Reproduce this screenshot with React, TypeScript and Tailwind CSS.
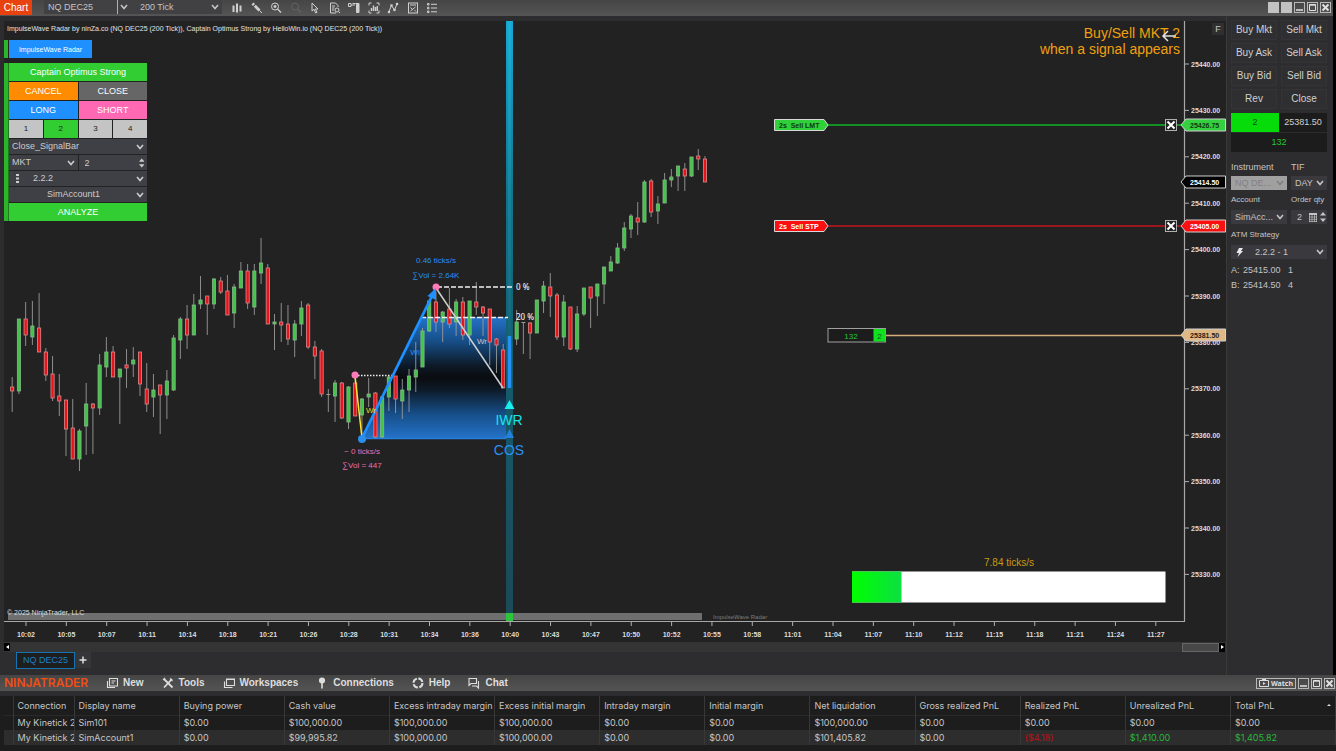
import React from "react";

type Bar = ["g" | "r" | "d", number, number, number, number];

// direction, wick top, body top, body bottom, wick bottom
const bars: (Bar | null)[] = [
  ["r", 377, 387, 391, 412], ["g", 319, 319, 391, 394], ["r", 302, 319, 335, 346], ["g", 301, 326, 337, 345],
  ["r", 293, 328, 352, 352], ["r", 348, 352, 375, 381], ["r", 356, 374, 398, 401], ["r", 374, 396, 401, 416],
  ["r", 400, 400, 429, 456], ["r", 399, 428, 459, 459], ["g", 429, 431, 459, 471], ["g", 383, 404, 426, 455],
  ["r", 403, 404, 408, 454], ["g", 354, 365, 408, 415], ["g", 337, 352, 367, 377], ["r", 346, 352, 377, 377],
  ["g", 369, 369, 377, 424], ["r", 349, 365, 368, 388], ["g", 347, 360, 364, 377], ["r", 352, 352, 384, 396],
  ["r", 363, 389, 404, 412], ["g", 374, 390, 397, 417], ["r", 385, 385, 395, 434], ["g", 370, 381, 395, 419],
  ["g", 335, 338, 390, 391], ["g", 317, 319, 340, 359], ["r", 305, 319, 335, 349], ["g", 294, 305, 335, 335],
  ["g", 276, 300, 304, 309], ["r", 296, 296, 304, 335], ["g", 278, 279, 304, 309], ["r", 277, 281, 292, 294],
  ["r", 275, 291, 315, 315], ["g", 284, 287, 313, 328], ["g", 262, 271, 288, 288], ["r", 264, 271, 303, 309],
  ["g", 264, 271, 307, 315], ["g", 238, 263, 273, 284], ["r", 264, 268, 324, 324], ["g", 314, 322, 324, 350],
  ["r", 303, 322, 325, 342], ["r", 305, 324, 339, 345], ["g", 320, 324, 340, 357], ["g", 301, 308, 324, 336],
  ["r", 303, 305, 347, 349], ["r", 341, 347, 356, 379], ["r", 349, 351, 394, 397], ["d", 389, 394, 395, 412],
  ["g", 380, 383, 396, 422], ["r", 382, 383, 418, 419], ["g", 386, 387, 422, 429], ["r", 377, 383, 416, 416],
  ["g", 398, 399, 415, 438], ["g", 378, 394, 397, 407], ["r", 392, 393, 437, 438], ["g", 396, 397, 437, 438],
  ["g", 376, 377, 397, 411], ["r", 376, 376, 399, 413], ["g", 379, 390, 401, 419], ["g", 369, 376, 390, 412],
  ["g", 342, 370, 377, 392], ["g", 328, 331, 367, 367], ["g", 301, 301, 331, 332], ["r", 292, 302, 322, 332],
  ["g", 311, 312, 322, 342], ["r", 288, 309, 324, 328], ["g", 299, 302, 322, 336], ["r", 297, 302, 335, 340],
  ["g", 301, 301, 335, 345], ["r", 282, 302, 307, 315], ["r", 306, 307, 313, 336], ["r", 309, 309, 342, 365],
  ["r", 338, 339, 345, 373], ["r", 344, 350, 388, 388], null, ["g", 310, 322, 339, 345],
  ["d", 322, 322, 323, 354], ["r", 322, 323, 333, 359], ["g", 300, 300, 333, 333], ["g", 281, 286, 301, 313],
  ["r", 273, 287, 296, 317], ["r", 293, 295, 337, 340], ["g", 295, 302, 337, 346], ["r", 307, 307, 349, 350],
  ["g", 306, 314, 349, 352], ["g", 288, 288, 314, 316], ["r", 287, 287, 298, 328], ["g", 284, 284, 296, 316],
  ["g", 267, 267, 284, 304], ["g", 256, 262, 271, 271], ["g", 243, 248, 263, 264], ["g", 222, 228, 248, 251],
  ["g", 214, 216, 229, 238], ["r", 202, 218, 222, 235], ["g", 180, 182, 222, 223], ["r", 179, 181, 212, 217],
  ["g", 196, 204, 211, 224], ["g", 173, 180, 203, 203], ["g", 169, 177, 180, 187], ["g", 166, 166, 176, 191],
  ["r", 163, 169, 176, 191], ["g", 157, 157, 176, 177], ["r", 149, 156, 159, 170], ["r", 156, 159, 182, 182],
];

const times = [
  "10:02", "10:05", "10:07", "10:11", "10:14", "10:18", "10:21", "10:26", "10:28", "10:31", "10:34", "10:36",
  "10:40", "10:43", "10:47", "10:50", "10:52", "10:55", "10:58", "11:01", "11:04", "11:07", "11:10", "11:12",
  "11:15", "11:18", "11:21", "11:24", "11:27",
];

const prices = Array.from({ length: 12 }, (_, i) => 25440 - i * 10);

function PriceTag({ y, fill, text, value }: { y: number; fill: string; text: string; value: string }) {
  return (
    <g>
      <path d={`M1181 ${y}L1186 ${y - 6}H1225.500V${y + 6}H1186Z`} fill={fill} stroke="#d0d0d0" />
      <text x="1190" y={y + 3} fill={text} className="text-[7px] font-bold">{value}</text>
    </g>
  );
}

function OrderLine({ y, fill, stroke, text, label }: { y: number; fill: string; stroke: string; text: string; label: string }) {
  return (
    <g>
      <path d={`M828 ${y}H1182`} stroke={stroke} strokeWidth="1.500" />
      <path d={`M774.500 ${y - 5.5}H824L828 ${y}L824 ${y + 5.5}H774.500Z`} fill={fill} stroke="#d8d8d8" />
      <text x="779" y={y + 3} fill={text} className="text-[7px] font-bold whitespace-pre">{label}</text>
    </g>
  );
}

function Chart() {
  return (
    <svg viewBox="4 21 1222 621" className="block h-auto w-full bg-[#222222] font-['Liberation_Sans',sans-serif]">
      <defs>
        <linearGradient id="zone" x1="0" y1="0" x2="0" y2="1">
          <stop offset="0" stopColor="#2472c8" />
          <stop offset="0.2" stopColor="#174e88" />
          <stop offset="0.4" stopColor="#0d1a28" />
          <stop offset="0.5" stopColor="#0a0c0f" />
          <stop offset="0.6" stopColor="#0d1a28" />
          <stop offset="0.8" stopColor="#174e88" />
          <stop offset="1" stopColor="#2472c8" />
        </linearGradient>
        <linearGradient id="beam" x1="0" y1="0" x2="0" y2="1">
          <stop offset="0" stopColor="#18a8d4" />
          <stop offset="0.3" stopColor="#127488" />
          <stop offset="0.6" stopColor="#155b6c" />
          <stop offset="1" stopColor="#1c4a59" />
        </linearGradient>
        <linearGradient id="core" x1="0" y1="0" x2="0" y2="1">
          <stop offset="0" stopColor="#22b4dc" stopOpacity="0.5" />
          <stop offset="0.6" stopColor="#22b4dc" stopOpacity="0" />
        </linearGradient>
        <linearGradient id="speed">
          <stop offset="0" stopColor="#00ff00" />
          <stop offset="1" stopColor="#0ce042" />
        </linearGradient>
      </defs>

      <text x="7" y="31" className="fill-[#e4e4e4] text-[7px]">
        ImpulseWave Radar by ninZa.co (NQ DEC25 (200 Tick)), Captain Optimus Strong by HelloWin.io (NQ DEC25 (200 Tick))
      </text>

      <path d="M362 438L421 317H510V438Z" fill="url(#zone)" />
      <path d="M362 438.500H510" stroke="#2480dc" strokeWidth="1.500" />
      <rect x="506" y="21" width="7" height="592" fill="url(#beam)" />
      <rect x="508" y="21" width="3" height="592" fill="url(#core)" />

      {bars.map((b, i) => {
        if (!b) return null;
        const x = 12.2 + i * 6.726;
        const [d, hi, top, bottom, lo] = b;
        const fill = d === "g" ? "#42c448" : "#e8141c";
        const edge = d === "g" ? "#86b888" : "#d88c8c";
        return (
          <g key={i}>
            <path d={`M${x} ${hi}V${lo}`} stroke="#9a9a9a" strokeWidth="0.900" />
            {d === "d" ? (
              <path d={`M${x - 2} ${top + 0.5}H${x + 2}`} stroke="#9a9a9a" />
            ) : (
              <rect x={x - 1.6} y={top} width="3.200" height={Math.max(bottom - top, 2)} fill={fill} stroke={edge} strokeWidth="0.800" />
            )}
          </g>
        );
      })}
      <path d="M509.500 336V388" stroke="#2590f5" strokeWidth="3.500" />

      <path d="M437 287H512M421 317.500H508" stroke="#f0f0f0" strokeWidth="1.500" strokeDasharray="5 2" />
      <path d="M355 375.500H394" stroke="#f0f0f0" strokeWidth="1.300" strokeDasharray="1.500 1.500" />
      <path d="M436 288L503 388" stroke="#cfcfcf" strokeWidth="1.500" fill="none" />
      <path d="M355 376L362 438" stroke="#ffe62e" strokeWidth="1.500" />
      <path d="M362 438L432 296" stroke="#1e90ff" strokeWidth="2.800" />
      <circle cx="355" cy="375" r="3.500" fill="#ff7ab8" />
      <circle cx="436" cy="287" r="3.500" fill="#ff7ab8" />
      <path d="M436 288L427.500 296L436 300Z" fill="#1e90ff" />
      <circle cx="362" cy="439" r="4" fill="#2b8eea" />

      <g className="text-[8px]" textAnchor="middle">
        <text x="436" y="263" className="fill-[#2a8fee]">0.46 ticks/s</text>
        <text x="436" y="278" className="fill-[#2a8fee]">∑Vol = 2.64K</text>
        <text x="362" y="454" className="fill-[#ee6fae]">~ 0 ticks/s</text>
        <text x="362" y="468" className="fill-[#ee6fae]">∑Vol = 447</text>
        <text x="415" y="355" className="fill-[#2a8fee]">Wi</text>
        <text x="371" y="413" className="fill-[#e8d820]">Wr</text>
        <text x="482" y="344" className="fill-[#c8c8c8]">Wr</text>
      </g>
      <g className="fill-[#f0f0f0] font-['Noto_Sans',sans-serif] text-[8px] font-medium">
        <text x="516" y="290">0 %</text>
        <text x="516" y="320">20 %</text>
      </g>
      <path d="M509.500 400L514.500 409H504.500Z" fill="#18f0f0" />
      <path d="M509.500 429L514 438H505Z" fill="#2380df" />
      <text x="509" y="425" textAnchor="middle" className="fill-[#18e4e8] text-[14px]">IWR</text>
      <text x="509" y="455" textAnchor="middle" className="fill-[#2a8fee] text-[14px]">COS</text>

      <g textAnchor="end" className="fill-[#f0a010] text-[14px]">
        <text x="1180" y="38">Buy/Sell MKT 2</text>
        <text x="1180" y="54">when a signal appears</text>
      </g>
      <path d="M1176 36H1163M1168 31L1163 36L1168 41" fill="none" stroke="#e0e0e0" strokeWidth="1.500" />

      <text x="1009" y="566" textAnchor="middle" className="fill-[#c79a12] text-[10px]">7.84 ticks/s</text>
      <rect x="852" y="571.500" width="313.500" height="31" fill="#ffffff" />
      <rect x="852" y="571.500" width="49.500" height="31" fill="url(#speed)" />

      <rect x="8" y="613" width="694" height="7" fill="#6f6f6f" />
      <rect x="506" y="613" width="7" height="8" fill="#2cc53c" />
      <text x="7" y="615" className="fill-[#dcdcdc] text-[7px]">© 2025 NinjaTrader, LLC</text>
      <text x="713" y="619" className="fill-[#7c7c7c] text-[6px]">ImpulseWave Radar</text>

      <path d="M4 621.500H1184.500V21" fill="none" stroke="#a8a8a8" strokeWidth="1.200" />
      <g className="fill-[#dcdcdc] text-[7px] font-bold">
        {times.map((t, i) => {
          const x = 26 + i * 40.35;
          return (
            <g key={t}>
              <path d={`M${x} 622V626`} stroke="#b0b0b0" />
              <text x={x} y="637" textAnchor="middle">{t}</text>
            </g>
          );
        })}
        {prices.map((p, i) => {
          const y = 64 + i * 46.4;
          return (
            <g key={p}>
              <path d={`M1185 ${y}H1189`} stroke="#b0b0b0" />
              <text x="1191" y={y + 2.5}>{p}.00</text>
            </g>
          );
        })}
      </g>

      <OrderLine y={125} fill="#2fd03a" stroke="#10b428" text="#0c3c10" label="2s  Sell LMT" />
      <OrderLine y={226} fill="#fa1010" stroke="#c41420" text="#ffffff" label="2s  Sell STP" />
      <path d="M886 335.500H1182" stroke="#d3ad7d" strokeWidth="1.500" />
      <rect x="828" y="328.500" width="57.500" height="13.500" fill="#1c1c1c" stroke="#a0a0a0" />
      <rect x="873.500" y="329" width="12" height="12.500" fill="#10e020" />
      <text x="851" y="339" textAnchor="middle" className="fill-[#22c832] text-[8px]">132</text>
      <text x="879.500" y="339" textAnchor="middle" className="fill-[#0c5c14] text-[8px]">2</text>
      <PriceTag y={125} fill="#34d040" text="#0c3c10" value="25426.75" />
      <PriceTag y={182} fill="#000000" text="#ffffff" value="25414.50" />
      <PriceTag y={226} fill="#fa1010" text="#ffffff" value="25405.00" />
      <PriceTag y={335} fill="#deb887" text="#2c2010" value="25381.50" />
    </svg>
  );
}

function Chevron({ className }: { className: string }) {
  return (
    <svg viewBox="0 0 8 6" className={`pointer-events-none absolute h-[6px] w-2 ${className}`} fill="none" stroke="currentColor" strokeWidth="1.600">
      <path d="M1 1L4 4.500L7 1" />
    </svg>
  );
}

function Pick({ label, value, className, inset = "pl-1" }: { label: string; value: string; className: string; inset?: string }) {
  return (
    <div className={`relative flex min-w-0 items-center ${className}`}>
      <select aria-label={label} className={`h-full w-full appearance-none truncate bg-transparent pr-2 outline-none ${inset}`}>
        <option>{value}</option>
      </select>
      <Chevron className="right-[3px]" />
    </div>
  );
}

function Spinner() {
  return (
    <svg viewBox="0 0 6 10" className="h-[10px] w-[6px]" fill="currentColor">
      <path d="M3 0L6 3.500H0ZM3 10L0 6.500H6Z" />
    </svg>
  );
}

function StrategyPanel() {
  const cell = "flex items-center justify-center";
  return (
    <div className="absolute left-0 top-[19px] w-[143px] text-[9px] leading-none text-white">
      <div className="flex h-[18px] w-[88px] gap-px">
        <div className="w-1 bg-[#2bb52b]" />
        <button className="flex-1 bg-[#1e90ff] text-[7px]">ImpulseWave Radar</button>
      </div>
      <div className="mt-[5px] flex">
        <div className="w-1 shrink-0 bg-[#2bb52b]" />
        <div className="grid flex-1 grid-cols-4 gap-px border-l border-[#1c7a1c]">
          <div className={`${cell} col-span-4 h-[18px] bg-[#32cd32]`}>Captain Optimus Strong</div>
          <button className={`${cell} col-span-2 h-[18px] bg-[#ff8c00]`}>CANCEL</button>
          <button className={`${cell} col-span-2 h-[18px] bg-[#666666]`}>CLOSE</button>
          <button className={`${cell} col-span-2 h-[18px] bg-[#1e90ff]`}>LONG</button>
          <button className={`${cell} col-span-2 h-[18px] bg-[#ff69b4]`}>SHORT</button>
          <button className={`${cell} h-[18px] bg-[#c4c4c4] text-[8px] text-[#222]`}>1</button>
          <button className={`${cell} h-[18px] bg-[#32cd32] text-[8px] text-[#222]`}>2</button>
          <button className={`${cell} h-[18px] bg-[#c4c4c4] text-[8px] text-[#222]`}>3</button>
          <button className={`${cell} h-[18px] bg-[#c4c4c4] text-[8px] text-[#222]`}>4</button>
          <Pick label="Entry mode" value="Close_SignalBar" className="col-span-4 h-[15px] bg-[#3f3f46] text-[#cccccc]" inset="pl-[3px]" />
          <Pick label="Order type" value="MKT" className="col-span-2 h-[15px] bg-[#3f3f46] text-[#cccccc]" inset="pl-[3px]" />
          <div className="col-span-2 flex h-[15px] items-center bg-[#3f3f46] pr-[3px] text-[#cccccc]">
            <input aria-label="Quantity" defaultValue="2" className="w-full min-w-0 bg-transparent pl-[6px] outline-none" />
            <Spinner />
          </div>
          <div className="col-span-4 flex h-[15px] items-center bg-[#3f3f46] pl-[7px] text-[#cccccc]">
            <svg viewBox="0 0 3 9" className="h-[9px] w-[3px]" fill="currentColor">
              <path d="M0 0H3V2H0ZM0 3.500H3V5.500H0ZM0 7H3V9H0Z" />
            </svg>
            <Pick label="ATM template" value="2.2.2" className="h-full flex-1" inset="pl-[14px]" />
          </div>
          <Pick label="Trading account" value="SimAccount1" className="col-span-4 h-[15px] bg-[#3f3f46] text-[#cccccc]" inset="pl-[38px]" />
          <button className={`${cell} col-span-4 h-[18px] bg-[#32cd32]`}>ANALYZE</button>
        </div>
      </div>
    </div>
  );
}

const toolIcons: { name: string; dim?: boolean; art: React.ReactNode }[] = [
  { name: "Chart style", art: <path d="M2.500 3.500V10M6 1.500V10.500M9.500 3.500V9.500" strokeWidth="2" /> },
  { name: "Draw", art: <><path d="M1.500 1.500L3 3" strokeWidth="2.800" /><path d="M3.800 3.800L8.500 8.500" strokeWidth="2.800" /><path d="M8.500 8.500L11 11" strokeWidth="1" /></> },
  { name: "Zoom in", art: <><circle cx="5" cy="4.500" r="3.500" /><path d="M3.500 4.500H6.500M5 3V6M7.500 7L11 10.500" strokeWidth="1.400" /></> },
  { name: "Zoom out", dim: true, art: <><circle cx="5" cy="4.500" r="3.500" /><path d="M7.500 7L11 10.500" strokeWidth="1.400" /></> },
  { name: "Pointer", art: <path d="M3 1V9L5 7.300L6.700 11L8 10.300L6.400 7H9Z" /> },
  { name: "Data box", art: <><path d="M7 11H1.500V1H6.500L9 3.500V5" /><path d="M3 4H6M3 6H5.500M3 8H5" /><circle cx="8" cy="8" r="2" /><path d="M9.500 9.500L11 11" /></> },
  { name: "Chart trader", art: <><path d="M0.500 1.500H3V4.500H0.500ZM3 3H7M4.500 1.500H7" /><path d="M7.500 1.500H11V10.500H8.500V1.500Z" fill="currentColor" /></> },
  { name: "Data series", art: <><path d="M1 3.500V1H3.500M8.500 1H11V3.500M11 8.500V11H8.500M3.500 11H1V8.500" /><path d="M3.500 9V6M5.500 9V3.500M7.500 9V5M9.300 9V4" strokeWidth="1.400" /></> },
  { name: "Indicators", art: <><path d="M2 9.500L4.500 3.500L7.500 8L10 2" /><path d="M1 9H3V11H1ZM3.500 2.500H5.500V4.500H3.500ZM6.500 7H8.500V9H6.500ZM9 1H11V3H9Z" fill="currentColor" strokeWidth="0.300" /></> },
  { name: "Strategies", art: <><rect x="1.500" y="1" width="9" height="10" /><path d="M3 3H9M3.500 9L8.500 5M3.500 5.500L5 7M7.500 8L9 9.500" /></> },
  { name: "Properties", art: <><path d="M1.500 1.500H3V3H1.500ZM1.500 5.300H3V6.800H1.500ZM1.500 9H3V10.500H1.500Z" /><path d="M5 2.300H11M5 6H11M5 9.800H11" /></> },
];

function WindowButton({ name, children }: { name: string; children: React.ReactNode }) {
  return (
    <button aria-label={name} className="flex h-[11px] w-[11px] items-center justify-center border border-[#b8b8b8] text-[#e0e0e0]">
      <svg viewBox="0 0 9 9" className="h-[9px] w-[9px]" fill="none" stroke="currentColor">{children}</svg>
    </button>
  );
}

function WindowButtons() {
  return (
    <>
      <WindowButton name="Minimize"><path d="M1 7H8" strokeWidth="1.500" /></WindowButton>
      <WindowButton name="Maximize"><path d="M1.500 1.500H7.500V7.500H1.500ZM1.500 2.200H7.500" /></WindowButton>
      <WindowButton name="Close"><path d="M1.500 1.500L7.500 7.500M7.500 1.500L1.500 7.500" strokeWidth="2" /></WindowButton>
    </>
  );
}

function TopBar() {
  return (
    <header className="flex h-4 items-start bg-linear-to-b from-[#454545] to-[#555555] pr-[2px] text-[9px] leading-none text-[#c4c4c4]">
      <button className="h-[15px] w-8 bg-[#e8430e] text-[10px] text-white">Chart</button>
      <div className="ml-3 flex h-[14px] w-[178px] bg-[#414143]">
        <div className="relative flex w-[87px]">
          <Pick label="Instrument" value="NQ DEC25" className="w-full" />
          <span className="pointer-events-none absolute right-[13px] h-full w-px bg-[#b0b0b0]" />
        </div>
        <Pick label="Interval" value="200 Tick" className="flex-1" inset="pl-[9px]" />
      </div>
      <nav className="ml-[9px] flex h-[15px] w-[207px] items-center justify-between text-[#d0d0d0]">
        {toolIcons.map((t) => (
          <button key={t.name} aria-label={t.name} className={t.dim ? "text-[#626262]" : ""}>
            <svg viewBox="0 0 12 12" className="block h-3 w-3" fill="none" stroke="currentColor">{t.art}</svg>
          </button>
        ))}
      </nav>
      <div className="ml-auto flex items-center gap-[2px] pt-[2px]">
        <button aria-label="Link instrument" className="h-[11px] w-[11px] bg-[#c2c2c2]" />
        <button aria-label="Link interval" className="h-[11px] w-[11px] bg-[#c2c2c2]" />
        <WindowButtons />
      </div>
    </header>
  );
}

function CancelOrder({ className, name }: { className: string; name: string }) {
  return (
    <button aria-label={name} className={`absolute right-[49px] h-3 w-3 border border-[#b0b0b0] bg-[#222] text-white ${className}`}>
      <svg viewBox="0 0 10 10" className="block h-[10px] w-[10px]" stroke="currentColor" strokeWidth="2">
        <path d="M1.500 1.500L8.500 8.500M8.500 1.500L1.500 8.500" />
      </svg>
    </button>
  );
}

function OrderPanel() {
  const actions = ["Buy Mkt", "Sell Mkt", "Buy Ask", "Sell Ask", "Buy Bid", "Sell Bid", "Rev", "Close"];
  const field = "h-[14px] bg-[#3a3a3e]";
  return (
    <aside className="w-[107px] shrink-0 border-l border-[#3a3a3a] pl-1 pr-[6px] pt-1 text-[9px] leading-none text-[#c4c4c4]">
      <div className="grid grid-cols-2 gap-x-1 gap-y-[3px]">
        {actions.map((a) => (
          <button key={a} className="h-5 whitespace-nowrap border border-[#343436] bg-[#2f2f31] text-[10px] text-[#d0d0d0]">{a}</button>
        ))}
      </div>
      <div className="mt-[4px] grid grid-cols-2 gap-y-px text-center">
        <div className="flex h-[19px] items-center justify-center bg-[#05dc0a] text-[#084c0c]">2</div>
        <div className="flex h-[19px] items-center justify-center bg-[#1c1c1c] text-[#d0d0d0]">25381.50</div>
        <div className="col-span-2 flex h-[19px] items-center justify-center bg-[#1c1c1c] text-[#22c832]">132</div>
      </div>
      <div className="mt-[10px] grid grid-cols-[56px_1fr] gap-x-1">
        <span className="h-[14px] pt-px text-[9px]">Instrument</span>
        <span className="h-[14px] pt-px text-[9px]">TIF</span>
        <Pick label="Instrument" value="NQ DE..." className="h-[14px] bg-[#a0a0a0] text-[#808080]" />
        <Pick label="TIF" value="DAY" className={field} />
        <span className="h-5 pt-[6px] text-[8px]">Account</span>
        <span className="h-5 whitespace-nowrap pt-[6px] text-[8px]">Order qty</span>
        <Pick label="Account" value="SimAcc..." className={field} />
        <div className={`flex items-center gap-[3px] pr-px ${field}`}>
          <input aria-label="Order qty" defaultValue="2" className="w-full min-w-0 bg-transparent pl-[6px] outline-none" />
          <svg viewBox="0 0 8 9" className="h-[9px] w-2 shrink-0" fill="none" stroke="currentColor">
            <path d="M0 1H8" strokeWidth="2" />
            <path d="M0.500 2V9M3 2V9M5.500 2V9M7.500 2V9M0 4H8M0 6.300H8M0 8.500H8" strokeWidth="0.700" />
          </svg>
          <span className="shrink-0"><Spinner /></span>
        </div>
      </div>
      <div className="h-[21px] pt-[7px] text-[8px]">ATM Strategy</div>
      <div className={`flex items-center pl-[5px] ${field}`}>
        <svg viewBox="0 0 7 9" className="h-[9px] w-[7px] shrink-0" fill="#e8e8e8">
          <path d="M3 0H7L5 3H7L1.500 9L3 5H0.500Z" />
        </svg>
        <Pick label="ATM Strategy" value="2.2.2 - 1" className="h-full flex-1" inset="pl-3" />
      </div>
      <div className="mt-[7px] grid grid-cols-[12px_45px_1fr] gap-y-[6px]">
        <span>A:</span><span>25415.00</span><span>1</span>
        <span>B:</span><span>25414.50</span><span>4</span>
      </div>
    </aside>
  );
}

const menu: { name: string; art: React.ReactNode }[] = [
  { name: "New", art: <><path d="M3.500 1.500H11.500V9H3.500Z" /><path d="M1.500 4V10.500H9M5.500 4H9.500M5.500 6H8" /></> },
  { name: "Tools", art: <><path d="M2 2L10.500 10.500" strokeWidth="1.800" /><path d="M10 2L2 10.500" strokeWidth="1.800" /><path d="M8 1.500L10.500 4M1 3L3 1" /></> },
  { name: "Workspaces", art: <><path d="M3.500 2H11.500V8.500H3.500Z" /><path d="M3.500 2.500H11.500M1.500 4.500V10.500H9.500" /></> },
  { name: "Connections", art: <><circle cx="6" cy="3.500" r="2.500" fill="currentColor" /><path d="M6 5V11.500" strokeWidth="1.600" /></> },
  { name: "Help", art: <circle cx="6" cy="6" r="4.500" strokeWidth="2" strokeDasharray="5.500 1.500" /> },
  { name: "Chat", art: <><path d="M1 1.500H8.500V6.500H3L1 8.500Z" /><path d="M10.500 4V11L8.500 9H4" /></> },
];

const columns = [
  "Connection", "Display name", "Buying power", "Cash value", "Excess intraday margin", "Excess initial margin",
  "Intraday margin", "Initial margin", "Net liquidation", "Gross realized PnL", "Realized PnL", "Unrealized PnL", "Total PnL",
];

const rows = [
  ["My Kinetick 2", "Sim101", "$0.00", "$100,000.00", "$100,000.00", "$100,000.00", "$0.00", "$0.00", "$100,000.00", "$0.00", "$0.00", "$0.00", "$0.00"],
  ["My Kinetick 2", "SimAccount1", "$0.00", "$99,995.82", "$100,000.00", "$100,000.00", "$0.00", "$0.00", "$101,405.82", "$0.00", "($4.18)", "$1,410.00", "$1,405.82"],
];

function tone(value: string, row: number, col: number) {
  if (value.startsWith("(")) return "text-[#c01018]";
  if (row === 1 && col > 10) return "text-[#28b838]";
  return "";
}

function ControlCenter() {
  return (
    <section>
      <header className="flex h-4 items-center bg-linear-to-b from-[#454545] to-[#545454] pl-1 text-[#dedede]">
        <div className="w-[102px] font-['Inter',sans-serif] text-[12px] font-semibold leading-none text-[#f04e14]">NINJATRADER</div>
        <nav className="flex items-center gap-[18px] font-['Liberation_Sans',sans-serif] text-[10px] font-bold leading-none">
          {menu.map((m) => (
            <button key={m.name} className="flex items-center gap-[5px]">
              <svg viewBox="0 0 12 12" className="h-3 w-3" fill="none" stroke="currentColor" strokeWidth="1.100">{m.art}</svg>
              {m.name}
            </button>
          ))}
        </nav>
        <div className="ml-auto flex items-center gap-[2px] pr-px">
          <button className="flex h-[11px] items-center gap-[2px] border border-[#b8b8b8] px-[2px] font-['Noto_Sans',sans-serif] text-[7px] font-bold leading-none">
            <svg viewBox="0 0 10 8" className="h-2 w-[10px]" fill="none" stroke="currentColor">
              <path d="M0.500 1.500H9.500V7.500H0.500ZM3 0.500H7" /><path d="M4 3V6L6.500 4.500Z" fill="currentColor" strokeWidth="0" />
            </svg>
            Watch
          </button>
          <WindowButtons />
        </div>
      </header>
      <div className="h-[5px] bg-[#2d2d30]" />
      <div className="pl-1">
        <table className="w-full table-fixed border-collapse bg-[#1d1d1d] text-left font-['Inter',sans-serif] text-[9px] leading-none text-[#c6c6c6]">
          <colgroup>
            <col className="w-[9px]" />
            <col className="w-[61px]" />
            {columns.slice(1).map((c) => <col key={c} />)}
          </colgroup>
          <thead>
            <tr className="h-[19px] border-b border-[#292929]">
              <td className="border-r border-[#383838]" />
              {columns.map((c, i) => (
                <th key={c} className="overflow-hidden whitespace-nowrap border-r border-[#383838] p-0 pl-1 font-normal">
                  <span className="flex items-center justify-between">
                    {c}
                    {i === 12 && <svg viewBox="0 0 4 2" className="mr-1 h-[2px] w-1" fill="#ddd"><path d="M0 2L2 0L4 2Z" /></svg>}
                  </span>
                </th>
              ))}
            </tr>
          </thead>
          <tbody>
            {rows.map((r, ri) => (
              <tr key={ri} className={ri === 1 ? "h-[15px] bg-[#2d2d2d]" : "h-[15px]"}>
                <td className="border-r border-[#383838]" />
                {r.map((v, ci) => (
                  <td key={ci} className={`overflow-hidden whitespace-nowrap border-r border-[#383838] p-0 pl-1 ${tone(v, ri, ci)}`}>{v}</td>
                ))}
              </tr>
            ))}
          </tbody>
        </table>
      </div>
    </section>
  );
}

export default function App() {
  return (
    <div className="flex min-h-screen flex-col bg-[#1d1d1d] font-['Liberation_Sans',sans-serif]">
      <div className="bg-black pr-[3px]">
        <div className="bg-[#2d2d30]">
          <TopBar />
          <div className="flex">
            <main className="min-w-0 flex-1 pl-1 pt-[5px]">
              <div className="relative">
                <Chart />
                <StrategyPanel />
                <button className="absolute right-[2px] top-[2px] h-3 w-3 bg-[#2f2f31] text-[9px] leading-none text-[#c4c4c4]">F</button>
                <CancelOrder name="Cancel limit order" className="top-[98px]" />
                <CancelOrder name="Cancel stop order" className="top-[199px]" />
              </div>
              <div className="flex h-[10px] items-center bg-[#343434]">
                <button aria-label="Scroll left" className="flex h-2 w-[6px] items-center justify-center bg-black">
                  <svg viewBox="0 0 3 4" className="h-1 w-[3px]" fill="#fff"><path d="M3 0V4L0 2Z" /></svg>
                </button>
                <div className="ml-auto h-[9px] w-[37px] border border-[#666] bg-[#484848]" />
                <button aria-label="Scroll right" className="mr-px flex h-[9px] w-[6px] items-center justify-center bg-black">
                  <svg viewBox="0 0 3 4" className="h-1 w-[3px]" fill="#fff"><path d="M0 0V4L3 2Z" /></svg>
                </button>
              </div>
              <div className="flex h-[23px] items-start pl-3">
                <button className="h-[17px] w-[59px] border border-[#1673b0] bg-[#1e1e1e] text-[9px] leading-none text-[#1b80c8]">NQ DEC25</button>
                <button aria-label="Add tab" className="flex h-4 w-4 items-center justify-center bg-[#363638]">
                  <svg viewBox="0 0 8 8" className="h-2 w-2" stroke="#e0e0e0" strokeWidth="1.500"><path d="M4 0.500V7.500M0.500 4H7.500" /></svg>
                </button>
              </div>
            </main>
            <OrderPanel />
          </div>
        </div>
      </div>
      <ControlCenter />
    </div>
  );
}
